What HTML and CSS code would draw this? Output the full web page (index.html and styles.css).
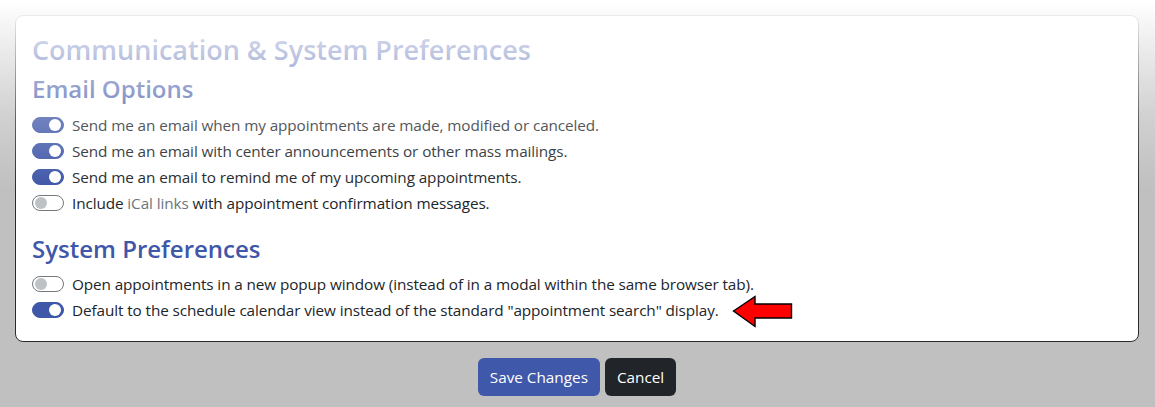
FILE: index.html
```html
<!DOCTYPE html>
<html lang="en">
<head>
  <meta charset="UTF-8" />
  <title>Communication &amp; System Preferences</title>
  <link rel="stylesheet" href="styles.css">
</head>
<body>
  <div class="page">
    <div class="prefs-card">
      <h3 class="card-title">Communication &amp; System Preferences</h3>

      <h4 class="section-title">Email Options</h4>
      <div class="switch-row"><span class="switch on"></span><span>Send me an email when my appointments are made, modified or canceled.</span></div>
      <div class="switch-row"><span class="switch on"></span><span>Send me an email with center announcements or other mass mailings.</span></div>
      <div class="switch-row"><span class="switch on"></span><span>Send me an email to remind me of my upcoming appointments.</span></div>
      <div class="switch-row"><span class="switch"></span><span>Include <a href="#" class="muted-link">iCal links</a> with appointment confirmation messages.</span></div>

      <h4 class="section-title system">System Preferences</h4>
      <div class="switch-row"><span class="switch"></span><span>Open appointments in a new popup window (instead of in a modal within the same browser tab).</span></div>
      <div class="switch-row"><span class="switch on"></span><span>Default to the schedule calendar view instead of the standard "appointment search" display.</span>
        <svg class="pointer-arrow" width="62" height="34" viewBox="0 0 62 34">
          <polygon points="1.5,16 23,1.5 23,9 59.5,9 59.5,23 23,23 23,31.5" fill="#ff0000" stroke="#000" stroke-width="1.4" stroke-linejoin="miter"/>
        </svg>
      </div>
    </div>

    <div class="actions">
      <button class="btn btn-primary">Save Changes</button>
      <button class="btn btn-dark">Cancel</button>
    </div>
  </div>
  <div class="top-fade"></div>
</body>
</html>
```

FILE: styles.css
```css
* {
  box-sizing: border-box;
}

html, body {
  margin: 0;
  padding: 0;
  height: 100%;
}

body {
  background: #c0c0c0;
  font-family: 'Open Sans', 'Noto Sans', sans-serif;
  font-size: 16px;
  color: #212529;
  overflow: hidden;
}

.page {
  padding: 15px 16px 0 15px;
}

.prefs-card {
  background: #fff;
  border: 1px solid #2b2b2b;
  border-radius: 8px;
  padding: 18px 16px 17px 16px;
}

.card-title {
  margin: 0 0 9px 0;
  font-size: 27px;
  font-weight: 600;
  line-height: 1.2;
  color: #3f57a8;
}

.section-title {
  margin: 0 0 8px 0;
  font-size: 24px;
  font-weight: 600;
  line-height: 1.2;
  color: #3f57a8;
}

.section-title.system {
  margin-top: 19px;
  margin-bottom: 7px;
}

.switch-row {
  display: flex;
  align-items: center;
  gap: 8px;
  height: 26px;
  font-size: 15.3px;
  letter-spacing: -0.1px;
  color: #212529;
}

.switch-row + .section-title.system + .switch-row + .switch-row {
  height: 27px;
}

.switch {
  flex: none;
  width: 32px;
  height: 16px;
  border-radius: 8px;
  border: 1px solid #75797e;
  background: #fff;
  display: flex;
  align-items: center;
  justify-content: flex-start;
  padding: 0 2px;
}

.switch::after {
  content: "";
  width: 12px;
  height: 12px;
  border-radius: 50%;
  background: #bfc2c5;
}

.switch.on {
  background: #3f57a8;
  border-color: #3f57a8;
  justify-content: flex-end;
}

.switch.on::after {
  background: #fff;
}

.muted-link {
  color: #6c757d;
  text-decoration: none;
}

.pointer-arrow {
  margin-left: 5px;
  margin-top: 3px;
  flex: none;
}

.actions {
  display: flex;
  justify-content: center;
  gap: 5px;
  margin-top: 16px;
}

.btn {
  font-family: 'Open Sans', 'Noto Sans', sans-serif;
  font-size: 15.3px;
  line-height: 24px;
  padding: 7px 12px;
  border: none;
  border-radius: 6px;
  color: #fff;
  cursor: pointer;
}

.btn-primary {
  background: #3f58a9;
}

.btn-dark {
  background: #212529;
}

.top-fade {
  position: fixed;
  top: 0;
  left: 0;
  right: 0;
  height: 190px;
  background: linear-gradient(to bottom, rgba(255, 255, 255, 1) 0px, rgba(255, 255, 255, 0.62) 60px, rgba(255, 255, 255, 0.25) 120px, rgba(255, 255, 255, 0) 190px);
  pointer-events: none;
}
```
